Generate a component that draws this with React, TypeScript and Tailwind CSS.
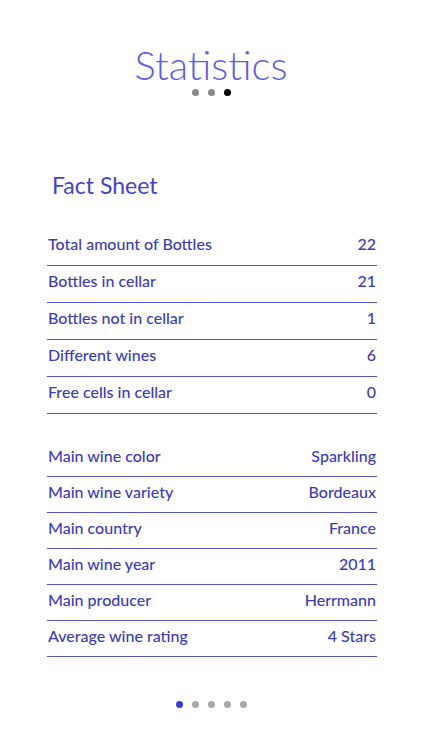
const facts = [
  { label: "Total amount of Bottles", value: "22" },
  { label: "Bottles in cellar", value: "21" },
  { label: "Bottles not in cellar", value: "1" },
  { label: "Different wines", value: "6" },
  { label: "Free cells in cellar", value: "0" },
]

const mains = [
  { label: "Main wine color", value: "Sparkling" },
  { label: "Main wine variety", value: "Bordeaux" },
  { label: "Main country", value: "France" },
  { label: "Main wine year", value: "2011" },
  { label: "Main producer", value: "Herrmann" },
  { label: "Average wine rating", value: "4 Stars" },
]

function Row({ label, value, tight }: { label: string; value: string; tight?: boolean }) {
  return (
    <div
      className={
        tight
          ? "flex items-center justify-between pt-[5px] pb-[10px] pr-px border-b border-[#5656c4]"
          : "flex items-center justify-between pt-[5px] pb-[11px] pr-px border-b border-[#5656c4]"
      }
    >
      <span className="h-5 leading-5 pl-px">{label}</span>
      <span className="h-5 leading-5">{value}</span>
    </div>
  )
}

export default function App() {
  return (
    <div
      className="w-[422px] h-[750px] bg-white flex flex-col text-[#3c3cb4]"
      style={{ fontFamily: "Lato, 'Open Sans', sans-serif" }}
    >
      <h1 className="mt-[41px] text-center text-[40px] leading-[48px] font-light text-[#5c60e0]">Statistics</h1>
      <div className="flex justify-center gap-[9px]">
        <span className="w-[7px] h-[7px] rounded-full bg-[#8a8a8a]" />
        <span className="w-[7px] h-[7px] rounded-full bg-[#8a8a8a]" />
        <span className="w-[7px] h-[7px] rounded-full bg-black" />
      </div>

      <h2 className="mt-[75px] ml-[52px] text-[23px] leading-[28px] text-[#4444c0]">Fact Sheet</h2>

      <div className="ml-[47px] mr-[45px] mt-[30px] text-[16px] font-medium">
        {facts.map((f) => (
          <Row key={f.label} {...f} />
        ))}
      </div>

      <div className="ml-[47px] mr-[45px] mt-[27px] text-[16px] font-medium">
        {mains.map((f) => (
          <Row key={f.label} {...f} tight />
        ))}
      </div>

      <div className="flex justify-center gap-[9px] mt-[44px]">
        <span className="w-[7px] h-[7px] rounded-full bg-[#3b3bd0]" />
        <span className="w-[7px] h-[7px] rounded-full bg-[#a8a8a8]" />
        <span className="w-[7px] h-[7px] rounded-full bg-[#a8a8a8]" />
        <span className="w-[7px] h-[7px] rounded-full bg-[#a8a8a8]" />
        <span className="w-[7px] h-[7px] rounded-full bg-[#a8a8a8]" />
      </div>
    </div>
  )
}
